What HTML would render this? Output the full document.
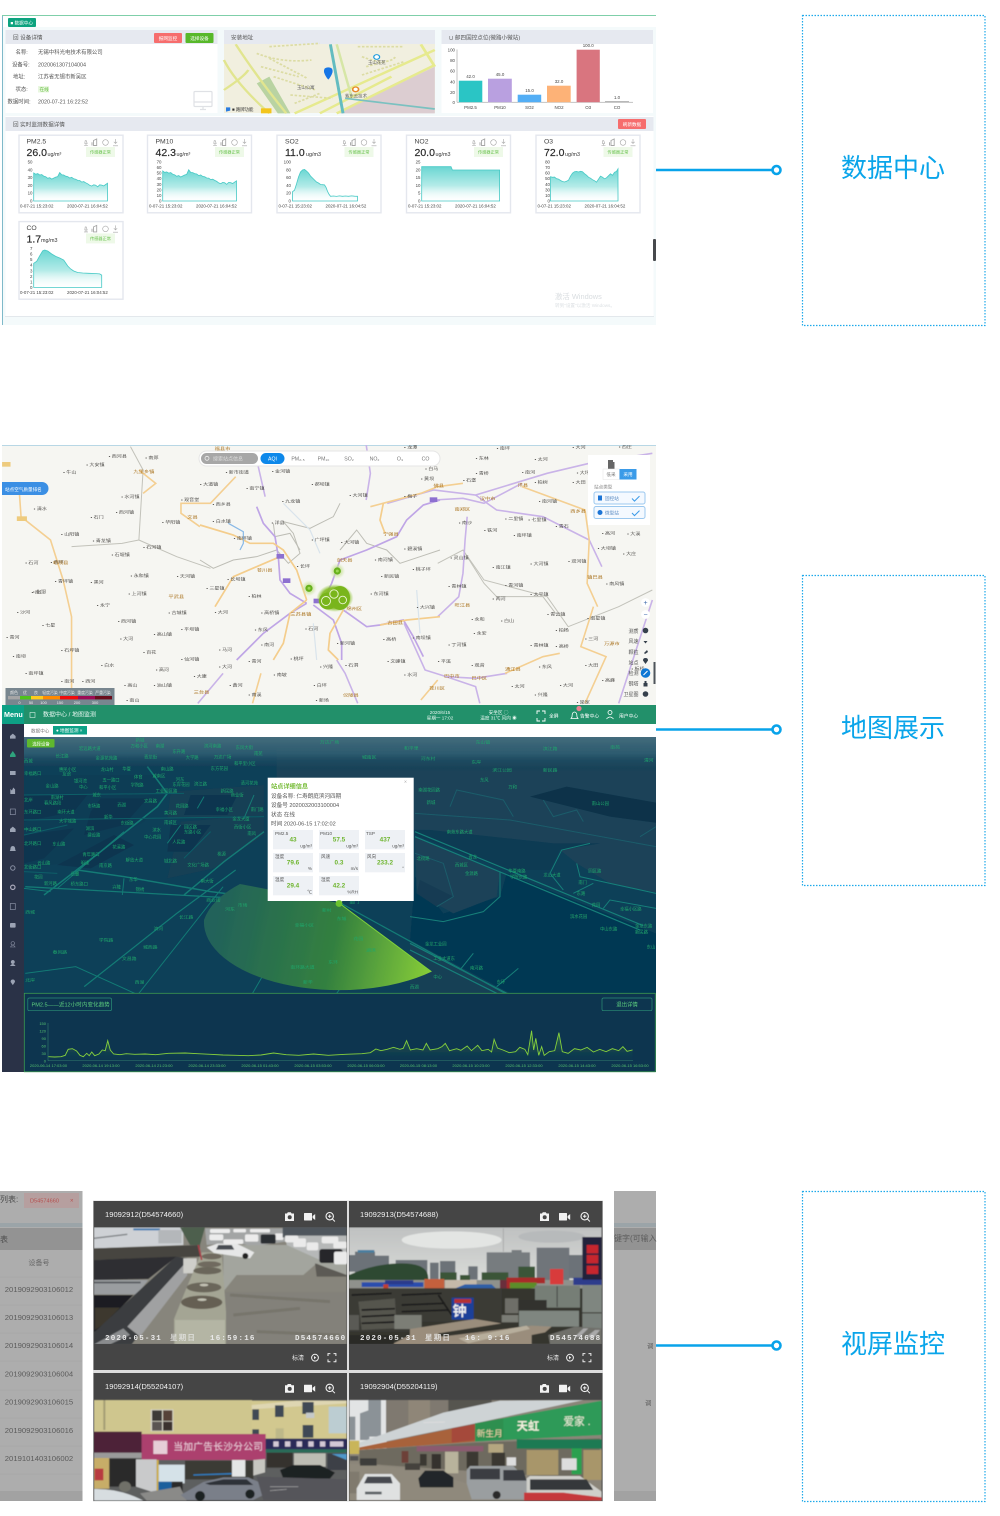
<!DOCTYPE html>
<html lang="zh-CN"><head><meta charset="utf-8"><title>数据中心</title>
<style>
html,body{margin:0;padding:0;background:#fff}
svg{display:block}
text{font-family:"Liberation Sans","Noto Sans CJK SC",sans-serif}
.lb{font-size:26px;fill:#0aa5ea;text-anchor:middle}
.ml text{font-size:12px;fill:#4f4d4a}
.mo text{font-size:12.5px;fill:#a8701a}
.dl text{font-size:11.5px;fill:#1fa86c}
.dk text{font-size:13px;fill:#1fa86c}
.c1{font-size:6.8px;fill:#444}
.c2{font-size:10.5px;fill:#2c2c2c;stroke:#2c2c2c;stroke-width:.2}
.c3{font-size:5.4px;fill:#333}
.ax{font-size:4.4px;fill:#444}
.s{font-size:5.6px;fill:#555}
.ts{font-family:"Liberation Mono","Noto Sans CJK SC",monospace;font-size:7.5px;font-weight:bold;fill:#e8e8e8;letter-spacing:1.2px}
.vt{font-size:7.6px;fill:#f0f0f0}
.rd{font-size:7.7px;fill:#5c5c5c}
.px{font-size:4.6px;fill:#555}
.pv{font-size:6.4px;font-weight:bold;fill:#6eb52f;text-anchor:middle}
.t5{font-size:5.6px;fill:#555}
.gx{font-size:4px;fill:#58c06e;text-anchor:middle}
</style></head><body>
<svg xmlns="http://www.w3.org/2000/svg" width="1000" height="1516" viewBox="0 0 1000 1516">
<defs>
<linearGradient id="t" x1="0" y1="0" x2="0" y2="1"><stop offset="0" stop-color="#6ad6d2"/><stop offset=".55" stop-color="#b4ebe8"/><stop offset="1" stop-color="#ffffff" stop-opacity=".2"/></linearGradient>
<linearGradient id="top" x1="0" y1="0" x2="0" y2="1"><stop offset="0" stop-color="#446c7c"/><stop offset=".5" stop-color="#2f5e72" stop-opacity=".85"/><stop offset="1" stop-color="#0f3d55" stop-opacity="0"/></linearGradient>
<linearGradient id="sec" gradientUnits="userSpaceOnUse" x1="215" y1="925" x2="430" y2="970"><stop offset="0" stop-color="#22625a"/><stop offset=".55" stop-color="#33803f"/><stop offset="1" stop-color="#86cc38"/></linearGradient>
<linearGradient id="gf" x1="0" y1="0" x2="0" y2="1"><stop offset="0" stop-color="#5fae3a" stop-opacity=".55"/><stop offset="1" stop-color="#0b3550" stop-opacity=".15"/></linearGradient>
<linearGradient id="sky" x1="0" y1="0" x2="0" y2="1"><stop offset="0" stop-color="#bfc1c1"/><stop offset=".45" stop-color="#d9dbd8"/><stop offset="1" stop-color="#c2c6c4"/></linearGradient>
<radialGradient id="gl"><stop offset="0" stop-color="#7cb518"/><stop offset=".75" stop-color="#82bb20" stop-opacity=".9"/><stop offset="1" stop-color="#9ccb50" stop-opacity="0"/></radialGradient>
<radialGradient id="gs"><stop offset="0" stop-color="#a5d060" stop-opacity=".8"/><stop offset=".6" stop-color="#c9e29a" stop-opacity=".6"/><stop offset="1" stop-color="#d8ebb5" stop-opacity="0"/></radialGradient>
<filter id="b3" x="-2%" y="-2%" width="104%" height="104%"><feGaussianBlur stdDeviation=".38"/></filter>
<filter id="b6" x="-2%" y="-2%" width="104%" height="104%"><feGaussianBlur stdDeviation="1.9"/></filter>
<clipPath id="cp1"><rect x="94" y="1227" width="253" height="117"/></clipPath>
<clipPath id="cp2"><rect x="349" y="1227" width="253" height="117"/></clipPath>
<clipPath id="cp3"><rect x="94" y="1399" width="253" height="102"/></clipPath>
<clipPath id="cp4"><rect x="349" y="1399" width="253" height="102"/></clipPath>
<clipPath id="cpd"><rect x="24" y="737" width="632" height="256"/></clipPath>
<clipPath id="cpm"><rect x="2" y="445" width="654" height="260"/></clipPath>
<g id="vh" fill="#f2f2f2">
<path d="M285 1213.5h2l.8-1.2h3l.8 1.2h2.4v7.5h-9z"/><circle cx="289.7" cy="1217.2" r="2" fill="#444"/>
<rect x="304" y="1213" width="8" height="7.5" rx=".6"/><path d="M312.6 1216l2.6-2v6l-2.6-2z"/>
<circle cx="329.7" cy="1216.2" r="3.7" fill="none" stroke="#f2f2f2" stroke-width="1.1"/><path d="M332.4 1219l2.5 2.5M328 1216.2h3.4M329.7 1214.5v3.4" stroke="#f2f2f2" stroke-width="1" fill="none"/>
</g>
<g id="vf" fill="none" stroke="#eee" stroke-width="1">
<circle cx="315" cy="1357.7" r="3.4"/><path d="M314 1356l2.2 1.6-2.2 1.6z" fill="#eee" stroke="none"/>
<path d="M328 1356v-2.4h2.4M333.5 1353.6h2.4v2.4M335.9 1359.4v2.4h-2.4M330.4 1361.8h-2.4v-2.4"/>
</g>
<g id="ci" fill="none" stroke="#a6a6a6" stroke-width=".6">
<path d="M84 145.5h4M86 145.5v-2M84.8 143.5h2.4l-1-3h-1z"/><path d="M93.5 145.5v-5l3.2-1.5v6.5zM92 145.5v-3.2" stroke-width=".9"/><circle cx="105.5" cy="142.5" r="2.8"/><path d="M115.5 139v4.2M113.8 141.8l1.7 1.7 1.7-1.7M113 145.8h5"/>
</g>
</defs>

<!-- ============ SECTION 1 ============ -->
<g filter="url(#b3)">
<rect x="2" y="16" width="654" height="309" fill="#f4fafb"/>
<rect x="2" y="15" width="654" height="1.3" fill="#7fcfa9"/>
<rect x="2" y="16" width="1" height="309" fill="#7fb9c9"/>
<rect x="3" y="16" width="653" height="11" fill="#fff"/>
<rect x="8" y="18" width="28" height="9" rx="1" fill="#0fa37f"/>
<text x="10.5" y="24.4" font-size="4.6" fill="#fff">■ 数据中心</text>

<rect x="5.5" y="30" width="212" height="83" fill="#fff"/><rect x="5.5" y="30" width="212" height="14" fill="#e6e9f0"/>
<rect x="224" y="30" width="211" height="83" fill="#fff"/><rect x="224" y="30" width="211" height="14" fill="#e6e9f0"/>
<rect x="441.5" y="30" width="211.5" height="83" fill="#fff"/><rect x="441.5" y="30" width="211.5" height="14" fill="#e6e9f0"/>
<text x="13" y="39.4" class="s">回 设备详情</text>
<text x="231" y="39.4" class="s">安装地址</text>
<text x="449" y="39.4" class="s">⊔ 邮四国控点位(微路小微站)</text>
<rect x="154" y="33" width="28" height="10" rx="1" fill="#f66d6d"/><text x="168" y="40" font-size="4.6" fill="#fff" text-anchor="middle">报网监控</text>
<rect x="185.5" y="33" width="28" height="10" rx="1" fill="#58b82c"/><text x="199.5" y="40" font-size="4.6" fill="#fff" text-anchor="middle">选择设备</text>

<g font-size="5.4" fill="#555">
<text x="15.5" y="54">名称:</text><text x="38" y="54">无锡中科光电技术有限公司</text>
<text x="12" y="66.3">设备号:</text><text x="38" y="66.3">2020061307104004</text>
<text x="13" y="78.6">地址:</text><text x="38" y="78.6">江苏省无锡市新吴区</text>
<text x="15.5" y="91">状态:</text><rect x="38" y="86" width="11" height="6.5" fill="#e9f7e0"/><text x="39.5" y="91" fill="#5fbd3a" font-size="4.6">在线</text>
<text x="7.5" y="103.3">数据时间:</text><text x="38" y="103.3">2020-07-21 16:22:52</text>
</g>
<g fill="none" stroke="#dfe1e5" stroke-width="1.2"><rect x="194" y="91.5" width="18" height="15" rx="1"/><path d="M194 102h18M200 109.5h6M203 106.5v3"/></g>

<!-- small map -->
<rect x="224" y="44" width="211" height="69" fill="#f1efdf"/>
<g transform="translate(0,10) scale(.42088,.33333)">
<path d="M800 310L1033 170V310z" fill="#dccdd1"/>
<path d="M610 220L660 310H690L640 200z" fill="#b9d3a2"/>
<path d="M532 150Q560 220 640 310M560 103Q610 200 680 310M532 240Q580 200 590 180" stroke="#e1e58f" stroke-width="6" fill="none"/>
<path d="M700 310L1033 120M800 310L1033 165M760 310L930 200M1000 103L1033 170" stroke="#e6ea8e" stroke-width="7" fill="none"/>
<path d="M785 103L815 310" stroke="#63bcc0" stroke-width="7" fill="none"/>
<path d="M820 265L1033 297" stroke="#7ac1c0" stroke-width="5" fill="none"/>
<path d="M800 103L835 260" stroke="#d6e6a6" stroke-width="6" fill="none"/>
<path d="M640 110l120 -10M610 130q60 30 130 20M620 170l90 30M650 200l100 40M690 255l100 10M850 110l110 0M860 140q60 30 80 0M870 170l60 -20M640 145l90 60M860 195l100 -40M700 280l60 -30" stroke="#dcdca4" stroke-width="5" stroke-dasharray="6 4" fill="none"/>
<path d="M780 172q-12 0-10 15q3 12 10 22q7-10 10-22q2-15-10-15z" fill="#1676e6"/>
<circle cx="895" cy="141" r="7" fill="#fff" stroke="#1d9bdc" stroke-width="3"/>
<circle cx="845" cy="238" r="7" fill="#fff" stroke="#e88a2a" stroke-width="4"/>
<rect x="620" y="295" width="25" height="15" fill="#f3c51f"/>
<path d="M537 292h10v10l-10 3z" fill="#2a7ce0"/>
</g>
<g font-size="4.4" fill="#666">
<text x="297" y="89" >玉山公寓</text><text x="368" y="64">玉山花苑</text><text x="345" y="97.5">紫东云技术</text><text x="232" y="111" fill="#333">■ 路牌功能</text>
</g>

<!-- bar chart -->
<path d="M457 49.5v52.7h176" stroke="#888" stroke-width=".5" fill="none"/>
<rect x="458.8" y="80.7" width="23.5" height="21.5" fill="#2cc5c5"/>
<rect x="488" y="78.7" width="23.8" height="23.5" fill="#b9a0e0"/>
<rect x="517.7" y="94.7" width="23.5" height="7.5" fill="#52aef5"/>
<rect x="547" y="85.7" width="23.7" height="16.5" fill="#fdb277"/>
<rect x="576.6" y="49.7" width="23.2" height="52.5" fill="#d9747f"/>
<rect x="605" y="101.3" width="24" height="1" fill="#999"/>
<g class="ax" text-anchor="end"><text x="455" y="51.5">100</text><text x="455" y="62">80</text><text x="455" y="72.5">60</text><text x="455" y="83.3">40</text><text x="455" y="93.8">20</text><text x="455" y="104">0</text></g>
<g class="ax" text-anchor="middle"><text x="470.5" y="78">42.0</text><text x="500" y="76">45.0</text><text x="529.5" y="92">15.0</text><text x="559" y="83">32.0</text><text x="588.2" y="47">100.0</text><text x="617" y="99">1.0</text>
<text x="470.5" y="109">PM2.5</text><text x="500" y="109">PM10</text><text x="529.5" y="109">SO2</text><text x="559" y="109">NO2</text><text x="588.2" y="109">O3</text><text x="617" y="109">CO</text></g>

<!-- section 2 -->
<rect x="5.5" y="116" width="648" height="200" fill="#fff"/>
<rect x="5.5" y="117" width="648" height="14" fill="#e6e9f0"/>
<text x="13" y="126.4" class="s">回 实时监测数据详情</text>
<rect x="618" y="119" width="28" height="10" rx="1" fill="#f66d6d"/><text x="632" y="126" font-size="4.6" fill="#fff" text-anchor="middle">刷新数据</text>

<!-- card 1 -->
<g>
<rect x="19" y="135.2" width="104" height="77.6" fill="#fff" stroke="#e4e7ee" stroke-width="1.4"/>
<text x="26.5" y="143.5" class="c1">PM2.5</text>
<text x="26.5" y="156" class="c2">26.0</text><text x="47.5" y="155.8" class="c3">ug/m³</text>
<rect x="86" y="147" width="29" height="10" fill="#eef9e8"/><text x="100.5" y="153.6" font-size="4.2" fill="#66c14a" text-anchor="middle">传感器正常</text>
<use href="#ci"/>
<g class="ax" text-anchor="end"><text x="32.5" y="163.6">50</text><text x="32.5" y="171.4">40</text><text x="32.5" y="179">30</text><text x="32.5" y="186.8">20</text><text x="32.5" y="194.6">10</text><text x="32.5" y="202.4">0</text></g>
<text x="20" y="207.5" class="ax">0-07-21 15:23:02</text><text x="67" y="207.5" class="ax">2020-07-21 16:04:52</text>
<path d="M33.7 173l2 1.2 2-.6 2 1.4 2-.5 2 1.6 2 .6 2 1.6 2-.6 2 1.4 2-1 2-1 2-.5 2-4 2 2.2 2 .2 2 1.2 2 .4 2 1.4 2-.7 2 1.5 2 .4 2 1.2 2 .1 2 1.6 2-.5 2 1.2 2 1 2 1.5 2 .8 2-1.3 2 .4 2 1.6 2-2 2 .3 2 .8 2-1.4 1.8-1.2V201H33.7z" fill="url(#t)" stroke="#46c9c5" stroke-width=".8"/>
</g>
<!-- card 2 -->
<g transform="translate(129,0)">
<rect x="18.5" y="135.2" width="104" height="77.6" fill="#fff" stroke="#e4e7ee" stroke-width="1.4"/>
<text x="26.5" y="143.5" class="c1">PM10</text>
<text x="26.5" y="156" class="c2">42.3</text><text x="47.5" y="155.8" class="c3">ug/m³</text>
<rect x="86" y="147" width="29" height="10" fill="#eef9e8"/><text x="100.5" y="153.6" font-size="4.2" fill="#66c14a" text-anchor="middle">传感器正常</text>
<use href="#ci"/>
<g class="ax" text-anchor="end"><text x="32.5" y="163.6">70</text><text x="32.5" y="169">60</text><text x="32.5" y="174.5">50</text><text x="32.5" y="180">40</text><text x="32.5" y="186">30</text><text x="32.5" y="191.5">20</text><text x="32.5" y="197">10</text><text x="32.5" y="202.4">0</text></g>
<text x="20" y="207.5" class="ax">0-07-21 15:23:02</text><text x="67" y="207.5" class="ax">2020-07-21 16:04:52</text>
<path d="M33.7 171l2 1.4 2-.5 2 1.2 2-.5 2 1.6 2 .7 2 1.4 2-.7 2 1.4 2-1 2-1 2-.6 2-4.6 2 2.6 2 .2 2 1 2 .4 2 1.6 2-.7 2 1.5 2 .4 2 1.2 2 .1 2 1.6 2-.5 2 1.2 2 1 2 1.5 2 .8 2-1.3 2 .4 2 1.6 2-2 2 .3 2 .8 2-1.4 1.8-1.2V201H33.7z" fill="url(#t)" stroke="#46c9c5" stroke-width=".8"/>
</g>
<!-- card 3 -->
<g transform="translate(258.5,0)">
<rect x="18.5" y="135.2" width="104" height="77.6" fill="#fff" stroke="#e4e7ee" stroke-width="1.4"/>
<text x="26.5" y="143.5" class="c1">SO2</text>
<text x="26.5" y="156" class="c2">11.0</text><text x="47.5" y="155.8" class="c3">ug/m3</text>
<rect x="86" y="147" width="29" height="10" fill="#eef9e8"/><text x="100.5" y="153.6" font-size="4.2" fill="#66c14a" text-anchor="middle">传感器正常</text>
<use href="#ci"/>
<g class="ax" text-anchor="end"><text x="32.5" y="163.6">100</text><text x="32.5" y="171.4">80</text><text x="32.5" y="179">60</text><text x="32.5" y="186.8">40</text><text x="32.5" y="194.6">20</text><text x="32.5" y="202.4">0</text></g>
<text x="20" y="207.5" class="ax">0-07-21 15:23:02</text><text x="67" y="207.5" class="ax">2020-07-21 16:04:52</text>
<path d="M34 191.7l2-1.5 2-6.2 2-7 2-5 2-2 2-.6 2 1.6 2 2 2 3 2 2 2 2 2 2 2 1 2 1.5 2 .2 2 .2 1.5 2.4 1.5 4 1.5 3 1.5 2 3-.3 3 .4 3-.5 3 .4 3-.3 3 .3 3-.4 3 .3 3 .1V201H34z" fill="url(#t)" stroke="#46c9c5" stroke-width=".8"/>
</g>
<!-- card 4 -->
<g transform="translate(388,0)">
<rect x="18.5" y="135.2" width="104" height="77.6" fill="#fff" stroke="#e4e7ee" stroke-width="1.4"/>
<text x="26.5" y="143.5" class="c1">NO2</text>
<text x="26.5" y="156" class="c2">20.0</text><text x="47.5" y="155.8" class="c3">ug/m3</text>
<rect x="86" y="147" width="29" height="10" fill="#eef9e8"/><text x="100.5" y="153.6" font-size="4.2" fill="#66c14a" text-anchor="middle">传感器正常</text>
<use href="#ci"/>
<g class="ax" text-anchor="end"><text x="32.5" y="163.6">25</text><text x="32.5" y="171.4">20</text><text x="32.5" y="179">15</text><text x="32.5" y="186.8">10</text><text x="32.5" y="194.6">5</text><text x="32.5" y="202.4">0</text></g>
<text x="20" y="207.5" class="ax">0-07-21 15:23:02</text><text x="67" y="207.5" class="ax">2020-07-21 16:04:52</text>
<path d="M33.7 166.7H63l1.4 3.3H111.6V201H33.7z" fill="url(#t)" stroke="#46c9c5" stroke-width=".8"/>
</g>
<!-- card 5 -->
<g transform="translate(517.5,0)">
<rect x="18.5" y="135.2" width="104" height="77.6" fill="#fff" stroke="#e4e7ee" stroke-width="1.4"/>
<text x="26.5" y="143.5" class="c1">O3</text>
<text x="26.5" y="156" class="c2">72.0</text><text x="47.5" y="155.8" class="c3">ug/m3</text>
<rect x="86" y="147" width="29" height="10" fill="#eef9e8"/><text x="100.5" y="153.6" font-size="4.2" fill="#66c14a" text-anchor="middle">传感器正常</text>
<use href="#ci"/>
<g class="ax" text-anchor="end"><text x="32.5" y="163.6">80</text><text x="32.5" y="169">70</text><text x="32.5" y="174.5">60</text><text x="32.5" y="180">50</text><text x="32.5" y="186">40</text><text x="32.5" y="191.5">30</text><text x="32.5" y="197">10</text><text x="32.5" y="202.4">0</text></g>
<text x="20" y="207.5" class="ax">0-07-21 15:23:02</text><text x="67" y="207.5" class="ax">2020-07-21 16:04:52</text>
<path d="M33 176.7l2 .6 2-.2 2 1.6 2 .4 2 1.4 2 1 2 .5 2-.8 2-1 2-4 2-3 2-1.5 2-.3 2 .6 2-.7 2 .4 2 2 2 1.5 2 2 2 1 2 1.5 2 1 2 1.5 2-3 2-3 2 1 2 1.6 2-1 2-2 2-2 2 1.5 2-3 2-1 1.5-2.5V201H33z" fill="url(#t)" stroke="#46c9c5" stroke-width=".8"/>
</g>
<!-- card 6 -->
<g transform="translate(0,86.4)">
<rect x="19" y="135.2" width="104" height="77.6" fill="#fff" stroke="#e4e7ee" stroke-width="1.4"/>
<text x="26.5" y="143.5" class="c1">CO</text>
<text x="26.5" y="156" class="c2">1.7</text><text x="41" y="155.8" class="c3">mg/m3</text>
<rect x="86" y="147" width="29" height="10" fill="#eef9e8"/><text x="100.5" y="153.6" font-size="4.2" fill="#66c14a" text-anchor="middle">传感器正常</text>
<use href="#ci"/>
<g class="ax" text-anchor="end"><text x="32.5" y="163.6">7</text><text x="32.5" y="169">6</text><text x="32.5" y="174.5">5</text><text x="32.5" y="180">4</text><text x="32.5" y="186">3</text><text x="32.5" y="191.5">2</text><text x="32.5" y="197">1</text><text x="32.5" y="202.4">0</text></g>
<text x="20" y="207.5" class="ax">0-07-21 15:23:02</text><text x="67" y="207.5" class="ax">2020-07-21 16:04:52</text>
<path d="M33.7 176.9l3-2 3-5.5 3-5 2-.8 3 1 4 3 4 2.4 4 1.6 4 2 2 3 2 3 3 3 3 2 4 1.5 5 .5 6 .3 6 .2 5 .4 2 1.2V201H33.7z" fill="url(#t)" stroke="#46c9c5" stroke-width=".8"/>
</g>
<text x="555" y="299" font-size="7.4" fill="#d9dde0">激活 Windows</text>
<text x="555" y="307" font-size="4.6" fill="#dde1e4">转到"设置"以激活 Windows。</text>
<rect x="5" y="316" width="649" height="1" fill="#e3e8ec"/>
<rect x="653" y="239" width="3" height="22" rx="1" fill="#46494d"/>
</g>

<!-- ============ SECTION 2: MAP ============ -->
<g clip-path="url(#cpm)">
<g filter="url(#b3)">
<rect x="2" y="445" width="654" height="260" fill="#f6f6f2"/>
<rect x="2" y="445" width="654" height=".8" fill="#a9cfe2"/>
<g transform="translate(0,440) scale(.42088,.33333)" fill="none">
<g stroke="#c2c2ba" stroke-width="1">
<polyline vector-effect="non-scaling-stroke" points="310,20 340,90 330,300 420,350 500,385"/>
<polyline vector-effect="non-scaling-stroke" points="1040,370 1100,330 1150,420 1300,470 1350,560 1470,500 1550,450"/>
<polyline vector-effect="non-scaling-stroke" points="1100,330 1150,430 1180,470 1290,470 1320,520"/>
<polyline vector-effect="non-scaling-stroke" points="170,320 290,310 330,300"/>
</g>
<g stroke="#c9b3e8" stroke-width="1.6">
<polyline vector-effect="non-scaling-stroke" points="610,60 630,170"/>
<polyline vector-effect="non-scaling-stroke" points="870,14 880,100 870,180"/>
<polyline vector-effect="non-scaling-stroke" points="470,790 530,700"/>
<polyline vector-effect="non-scaling-stroke" points="920,190 1030,150 1130,165 1300,100 1400,70 1550,40"/>
<polyline vector-effect="non-scaling-stroke" points="1030,180 1100,175 1150,190 1240,130"/>
<polyline vector-effect="non-scaling-stroke" points="1110,230 1105,300 1100,400 1090,470 1040,530"/>
<polyline vector-effect="non-scaling-stroke" points="960,550 1010,690 1060,710 1130,740 1140,790"/>
<polyline vector-effect="non-scaling-stroke" points="1060,710 1130,715 1205,700"/>
<polyline vector-effect="non-scaling-stroke" points="800,660 820,700 850,790"/>
<polyline vector-effect="non-scaling-stroke" points="1470,790 1550,480"/>
<polyline vector-effect="non-scaling-stroke" points="1130,165 1180,210 1290,230 1400,300 1430,380"/>
</g>
<g stroke="#f4cf92" stroke-width="1.6">
<polyline vector-effect="non-scaling-stroke" points="45,140 50,230 120,300 150,420 170,530 170,790"/>
<polyline vector-effect="non-scaling-stroke" points="330,90 370,130 340,160"/>
<polyline vector-effect="non-scaling-stroke" points="560,110 500,190 430,190 430,220 475,260"/>
<polyline vector-effect="non-scaling-stroke" points="620,700 600,790"/>
<polyline vector-effect="non-scaling-stroke" points="880,200 1000,160 1040,140 1100,130"/>
<polyline vector-effect="non-scaling-stroke" points="1410,500 1380,620 1440,650 1390,790"/>
<polyline vector-effect="non-scaling-stroke" points="1200,700 1290,650 1330,640"/>
<polyline vector-effect="non-scaling-stroke" points="1240,140 1390,210 1400,300 1395,430 1420,500"/>
<polyline vector-effect="non-scaling-stroke" points="1000,780 1040,720"/>
</g>
</g>
<!-- centre roads traced at 3x -->
<g transform="translate(200,500) scale(.33333)" fill="none">
<g stroke="#bdbdb5" stroke-width="1">
<polyline vector-effect="non-scaling-stroke" points="0,180 40,205 100,180 170,170 230,150 265,190 300,160 280,100 250,65 330,85 400,50 420,10"/>
<polyline vector-effect="non-scaling-stroke" points="220,70 225,110 270,100 300,150"/>
<polyline vector-effect="non-scaling-stroke" points="420,150 470,90 500,130 560,150 600,190 660,170 720,150"/>
</g>
<g stroke="#bfa5e6" stroke-width="1.7">
<polyline vector-effect="non-scaling-stroke" points="170,20 190,70 225,110 235,170 240,240 270,280 320,310"/>
<polyline vector-effect="non-scaling-stroke" points="720,0 670,15 620,60 590,110 500,150 420,180 395,250 380,280"/>
<polyline vector-effect="non-scaling-stroke" points="110,480 190,400 270,340 320,310"/>
<polyline vector-effect="non-scaling-stroke" points="340,315 400,360 425,430 425,480"/>
<polyline vector-effect="non-scaling-stroke" points="430,330 500,380 540,375 610,360 640,410 670,470"/>
</g>
<g stroke="#f4cd8c" stroke-width="1.7">
<polyline vector-effect="non-scaling-stroke" points="0,75 100,105 150,130 220,130 250,150 290,210 310,270 320,300"/>
<polyline vector-effect="non-scaling-stroke" points="45,320 100,230 240,170"/>
<polyline vector-effect="non-scaling-stroke" points="320,300 270,340 250,430 220,480"/>
<polyline vector-effect="non-scaling-stroke" points="430,330 390,400 385,450 415,480"/>
<polyline vector-effect="non-scaling-stroke" points="540,375 620,360 720,350"/>
<polyline vector-effect="non-scaling-stroke" points="550,10 540,60 555,100"/>
</g>
<polyline vector-effect="non-scaling-stroke" stroke="#88b8e6" stroke-width="1.2" points="85,70 130,95 130,130 120,150"/>
<polyline vector-effect="non-scaling-stroke" stroke="#d9e4ec" stroke-width="1.2" points="250,10 330,90 360,160"/>
<polyline vector-effect="non-scaling-stroke" stroke="#d9e4ec" stroke-width="1.2" points="340,370 350,480"/>
<polyline vector-effect="non-scaling-stroke" stroke="#d9e4ec" stroke-width="1.2" points="650,270 660,400"/>
</g>
<g transform="translate(0,440) scale(.42088,.33333)">
<g fill="#8d6fd0"><rect x="657" y="342" width="18" height="14"/><rect x="672" y="415" width="18" height="14"/><rect x="745" y="476" width="18" height="14"/><rect x="1021" y="172" width="18" height="14"/></g>
<g fill="#eecb7e"><rect x="5" y="66" width="20" height="14"/><rect x="40" y="229" width="24" height="14"/></g>
<g class="ml">
<text x="258" y="52">• 西河县</text><text x="345" y="57">• 南郑</text><text x="205" y="78">• 大安镇</text><text x="536" y="100">• 新市街道</text><text x="646" y="97">• 金河镇</text><text x="475" y="137">• 大道镇</text><text x="585" y="148">• 南宁镇</text><text x="740" y="137">• 郝坝镇</text><text x="830" y="170">• 大河镇</text><text x="288" y="174">• 水河镇</text><text x="430" y="183">• 观音堂</text><text x="670" y="187">• 九龙镇</text><text x="275" y="220">• 西河镇</text><text x="505" y="197">• 西乡县</text><text x="385" y="250">• 华阳镇</text><text x="505" y="247">• 白水镇</text><text x="645" y="252">• 洋县</text><text x="145" y="286">• 山阳镇</text><text x="220" y="306">• 青龙镇</text><text x="555" y="298">• 南坪镇</text><text x="340" y="325">• 石河镇</text><text x="740" y="303">• 广坪镇</text><text x="810" y="311">• 大河镇</text><text x="960" y="330">• 碧溪镇</text><text x="1070" y="357">• 灵山镇</text><text x="1170" y="385">• 南江镇</text><text x="1260" y="375">• 大河镇</text><text x="1350" y="368">• 双河镇</text><text x="1420" y="328">• 大坝镇</text><text x="265" y="348">• 石堰镇</text><text x="120" y="370">• 西坪</text><text x="60" y="372">• 石河</text><text x="890" y="363">• 南河镇</text><text x="980" y="391">• 桃子坪</text><text x="705" y="383">• 长坪</text><text x="310" y="411">• 永和镇</text><text x="420" y="412">• 天河镇</text><text x="490" y="449">• 三星镇</text><text x="130" y="427">• 青坪镇</text><text x="540" y="421">• 长坝镇</text><text x="78" y="459">• 化河</text><text x="305" y="465">• 上河镇</text><text x="590" y="472">• 柏林</text><text x="880" y="465">• 东河镇</text><text x="905" y="412">• 新民镇</text><text x="1065" y="443">• 青林镇</text><text x="1200" y="440">• 青河镇</text><text x="1260" y="466">• 太平镇</text><text x="1440" y="435">• 南风镇</text><text x="1300" y="526">• 青云镇</text><text x="510" y="520">• 大河</text><text x="400" y="522">• 古城镇</text><text x="620" y="522">• 高桥镇</text><text x="1120" y="541">• 永和</text><text x="1190" y="546">• 白山</text><text x="990" y="506">• 大兴镇</text><text x="280" y="547">• 西河镇</text><text x="430" y="572">• 平坝镇</text><text x="605" y="573">• 东风</text><text x="725" y="570">• 石河</text><text x="285" y="600">• 大河</text><text x="365" y="587">• 高山镇</text><text x="15" y="596">• 青河</text><text x="910" y="601">• 高桥</text><text x="980" y="597">• 南坝镇</text><text x="1125" y="583">• 永安</text><text x="1260" y="620">• 青林镇</text><text x="1320" y="575">• 柏杨</text><text x="1395" y="538">• 南星镇</text><text x="145" y="634">• 石坪镇</text><text x="520" y="633">• 马河</text><text x="620" y="618">• 南河</text><text x="800" y="613">• 新河镇</text><text x="1065" y="618">• 丁河镇</text><text x="1320" y="622">• 高桥</text><text x="30" y="652">• 南坝</text><text x="430" y="662">• 仙河镇</text><text x="590" y="668">• 青河</text><text x="690" y="660">• 桃坪</text><text x="920" y="667">• 文峰镇</text><text x="1040" y="668">• 平溪</text><text x="760" y="684">• 兴隆</text><text x="820" y="680">• 石洞</text><text x="60" y="703">• 南坪镇</text><text x="370" y="693">• 高河</text><text x="520" y="684">• 大河</text><text x="650" y="708">• 南坡</text><text x="960" y="708">• 水河</text><text x="1280" y="684">• 东风</text><text x="1390" y="680">• 大田</text><text x="145" y="727">• 南河</text><text x="195" y="727">• 西河</text><text x="460" y="713">• 大康</text><text x="295" y="739">• 高山</text><text x="365" y="740">• 油山镇</text><text x="545" y="740">• 黄河</text><text x="745" y="740">• 白坪</text><text x="1215" y="742">• 太河</text><text x="1330" y="740">• 大河</text><text x="590" y="768">• 南溪</text><text x="750" y="784">• 新场</text><text x="1270" y="768">• 兴隆</text><text x="300" y="784">• 南山</text><text x="1370" y="790">• 梁家</text><text x="1360" y="26">• 大河</text><text x="1470" y="24">• 西庄</text><text x="1180" y="28">• 南坪</text><text x="1270" y="62">• 太河</text><text x="1130" y="103">• 青桥</text><text x="1240" y="100">• 南河</text><text x="1370" y="102">• 大坪</text><text x="1470" y="100">• 新河</text><text x="1270" y="130">• 柏树</text><text x="1360" y="130">• 大田</text><text x="1490" y="130">• 太平</text><text x="1150" y="275">• 铁河</text><text x="1220" y="290">• 南坪镇</text><text x="1320" y="262">• 青石</text><text x="1200" y="240">• 二里镇</text><text x="1255" y="243">• 七里镇</text><text x="1430" y="283">• 高河</text><text x="1490" y="285">• 大溪</text><text x="1280" y="188">• 南河镇</text><text x="1390" y="600">• 三河</text><text x="1090" y="252">• 南沙</text><text x="960" y="172">• 梅子</text><text x="1000" y="120">• 黄坝</text><text x="1100" y="125">• 石堡</text><text x="1130" y="58">• 东林</text><text x="960" y="25">• 龙潭</text><text x="1010" y="90">• 白马</text><text x="40" y="520">• 沙河</text><text x="100" y="560">• 七星</text><text x="215" y="430">• 黑河</text><text x="230" y="500">• 永宁</text><text x="340" y="640">• 百花</text><text x="240" y="680">• 白水</text><text x="100" y="770">• 马家</text><text x="1500" y="690">• 板桥</text><text x="1430" y="725">• 高峰</text><text x="1170" y="480">• 两河</text><text x="1120" y="680">• 观音</text><text x="1480" y="345">• 大庄</text><text x="150" y="100">• 牛山</text><text x="80" y="210">• 清水</text><text x="215" y="235">• 石门</text><text x="75" y="460">• 南口</text>
</g>
<g class="mo">
<text x="317" y="99">九里乡镇</text><text x="125" y="372">毛项县</text><text x="400" y="474">平武县</text><text x="610" y="395">苍川县</text><text x="823" y="510">绵州区</text><text x="690" y="526">三苏县镇</text><text x="920" y="552">古田县</text><text x="1080" y="500">旺江县</text><text x="1030" y="141">佛县</text><text x="1080" y="211">南郑区</text><text x="1355" y="218">西乡县</text><text x="1230" y="140">洋县</text><text x="910" y="287">宁强县</text><text x="800" y="365">剑天县</text><text x="1200" y="692">通江县</text><text x="1020" y="748">苍川区</text><text x="1120" y="718">巴中区</text><text x="1395" y="416">镇巴县</text><text x="1435" y="615">万源市</text><text x="815" y="770">仪陇县</text><text x="460" y="760">三台县</text><text x="445" y="236">文县</text><text x="510" y="30" fill="#555">福县市</text><text x="1140" y="180" fill="#555">汉中市</text><text x="1055" y="712" fill="#555">巴中市</text>
</g>
</g>
<!-- clusters -->
<circle cx="337.3" cy="571" r="8" fill="url(#gs)"/><circle cx="337.3" cy="571" r="3.6" fill="#66b11b"/><circle cx="337.3" cy="571" r="1.5" fill="#9cd654"/>
<circle cx="309" cy="588.3" r="8" fill="url(#gs)"/><circle cx="309" cy="588.3" r="3.6" fill="#66b11b"/><circle cx="309" cy="588.3" r="1.5" fill="#9cd654"/>
<ellipse cx="335" cy="598" rx="18.5" ry="14" fill="url(#gl)"/><ellipse cx="340" cy="598" rx="10" ry="12" fill="#79b51a"/><ellipse cx="328" cy="601" rx="9" ry="8.5" fill="#79b51a"/>
<g fill="none" stroke="#eef7d8" stroke-width=".9"><circle cx="334" cy="594" r="4.2"/><circle cx="326" cy="601" r="4.5"/><circle cx="342.7" cy="600" r="3.8"/></g>

<!-- search bar -->
<rect x="199" y="451" width="241" height="15" rx="7.5" fill="#fff" stroke="#e5e5e5"/>
<rect x="201" y="453" width="57" height="11" rx="5.5" fill="#a7a7a7"/>
<circle cx="207" cy="458.3" r="2" fill="none" stroke="#eee" stroke-width=".8"/><text x="213" y="460.5" font-size="5" fill="#ddd">搜索站点信息</text>
<rect x="260.5" y="453" width="24" height="11" rx="5.5" fill="#0d88ea"/><text x="272.5" y="460.6" font-size="5.2" fill="#fff" text-anchor="middle">AQI</text>
<g font-size="5.2" fill="#777" text-anchor="middle"><text x="298" y="460.6">PM₂.₅</text><text x="323.5" y="460.6">PM₁₀</text><text x="349" y="460.6">SO₂</text><text x="374.5" y="460.6">NO₂</text><text x="400" y="460.6">O₃</text><text x="425.5" y="460.6">CO</text></g>
<!-- right panel -->
<rect x="588" y="455" width="62" height="70" fill="#fff"/>
<path d="M608 460h5v9.5h-5zM613 462h1.5v7.5H613z" fill="#666"/>
<rect x="603" y="469" width="16.5" height="10.5" fill="#fff" stroke="#e5e5e5" stroke-width=".5"/><text x="611" y="476.2" font-size="4.6" fill="#777" text-anchor="middle">低采</text>
<rect x="619.5" y="469" width="17" height="10.5" fill="#3b9be8"/><text x="628" y="476.2" font-size="4.6" fill="#fff" text-anchor="middle">采用</text>
<text x="594" y="488.5" font-size="4.6" fill="#888">站点类型</text>
<rect x="594" y="492" width="51" height="12" rx="2" fill="#f4f9ff" stroke="#9bc8ef"/><rect x="598" y="495.5" width="4" height="5" fill="#1c74d6"/><text x="605" y="500.2" font-size="4.6" fill="#5a8bc2">固控站</text><path d="M632 498.5l2.5 2.6 5-5" fill="none" stroke="#3b9be8"/>
<rect x="594" y="506.5" width="51" height="12" rx="2" fill="#f4f9ff" stroke="#9bc8ef"/><circle cx="600" cy="512.5" r="2.5" fill="#1c74d6"/><text x="605" y="514.7" font-size="4.6" fill="#5a8bc2">微型站</text><path d="M632 513l2.5 2.6 5-5" fill="none" stroke="#3b9be8"/>
<!-- left pill -->
<path d="M2 482h40a6.5 6.5 0 0 1 0 13H2z" fill="#3a8fe4"/><text x="5" y="491" font-size="4.6" fill="#fff">站点空气质量排名</text>
<!-- right tools -->
<circle cx="645.5" cy="602.5" r="4.4" fill="#fff"/><text x="645.5" y="605" font-size="7" fill="#3766a8" text-anchor="middle">+</text>
<circle cx="645.5" cy="614.5" r="4.4" fill="#fff"/><text x="645.5" y="617" font-size="7" fill="#3766a8" text-anchor="middle">−</text>
<g font-size="5" fill="#555" text-anchor="middle"><text x="633.5" y="633">测质</text><text x="633.5" y="643">风速</text><text x="633.5" y="654">颗粒</text><text x="633.5" y="664.5">站点</text><text x="633.5" y="675">检测</text><text x="633.5" y="685.5">钢塔</text><text x="631" y="696">卫星图</text></g>
<g fill="#34404c"><circle cx="645.5" cy="630.5" r="2.8"/><path d="M643.5 641h4l-2 2.5zM644 653l3-3 1 2-3 2zM645.5 658q-2.6 0-2.5 2.5l2.5 3.5 2.5-3.5q.1-2.5-2.5-2.5zM643.5 683h4v3.5h-4zM644.5 681h2v2h-2z"/><circle cx="645.5" cy="694" r="2.8"/></g>
<circle cx="645.5" cy="673" r="4.8" fill="#1077d4"/><path d="M643.5 675l4-4" stroke="#fff"/>
<rect x="653.5" y="662" width="2" height="22" fill="#4f555c"/>
<!-- legend -->
<rect x="5.5" y="688" width="109" height="17" fill="#78868f"/>
<g font-size="3.9" fill="#e6e6e6" text-anchor="middle"><text x="14" y="694">颜色</text><text x="25" y="694">优</text><text x="36" y="694">良</text><text x="50" y="694">轻度污染</text><text x="67" y="694">中度污染</text><text x="85" y="694">重度污染</text><text x="103" y="694">严重污染</text></g>
<rect x="8" y="696" width="12" height="3.4" fill="#a5a5a5"/><rect x="20" y="696" width="11" height="3.4" fill="#4fc21c"/><rect x="31" y="696" width="12" height="3.4" fill="#ffca1f"/><rect x="43" y="696" width="17" height="3.4" fill="#ff8a00"/><rect x="60" y="696" width="18" height="3.4" fill="#ef0b0b"/><rect x="78" y="696" width="17" height="3.4" fill="#9c0e54"/><rect x="95" y="696" width="17" height="3.4" fill="#6b0a1a"/>
<g font-size="3.9" fill="#eee" text-anchor="middle"><text x="19.5" y="704">0</text><text x="31" y="704">50</text><text x="43.5" y="704">100</text><text x="60" y="704">150</text><text x="77" y="704">200</text><text x="95" y="704">300</text></g>
</g>
</g>

<!-- ============ SECTION 2b: DARK MAP ============ -->
<g filter="url(#b3)">
<rect x="2" y="705" width="654" height="19.5" fill="#20906a"/>
<rect x="2" y="705" width="22" height="19.5" fill="#0fa085"/>
<text x="4" y="716.8" font-size="7.2" font-weight="bold" fill="#fff">Menu</text>
<rect x="30" y="712.5" width="5" height="5" fill="none" stroke="#d8f0e4" stroke-width=".6"/>
<text x="43" y="716.5" font-size="6" fill="#e9f7f1">数据中心 / 地图监测</text>
<g font-size="4.6" fill="#e9f7f1" text-anchor="middle"><text x="440" y="714">2020/6/15</text><text x="440" y="719.5">星期一 17:02</text><text x="498.5" y="714">安坐区 ◯</text><text x="498.5" y="719.5">温度 31℃ 风向 ◉</text></g>
<path d="M537 714v-3h3M542 711h3v3M545 718v3h-3M540 721h-3v-3" stroke="#fff" fill="none" stroke-width=".9"/><text x="549" y="717.6" font-size="4.8" fill="#fff">全屏</text>
<path d="M572 717q0-5 2.5-5t2.5 5l1 1.5h-7z" fill="none" stroke="#fff" stroke-width=".8"/><circle cx="579" cy="708.5" r="2.6" fill="#e98090"/><text x="580" y="717.6" font-size="4.8" fill="#fff">告警中心</text>
<circle cx="610" cy="712.5" r="2" fill="none" stroke="#fff" stroke-width=".8"/><path d="M606.5 719q3.5-4 7 0" fill="none" stroke="#fff" stroke-width=".8"/><text x="619" y="717.6" font-size="4.8" fill="#fff">用户中心</text>

<rect x="2" y="724" width="22" height="348" fill="#2a3046"/>
<rect x="24" y="724" width="632" height="13" fill="#fff"/>
<text x="31" y="732.6" font-size="4.6" fill="#777">数据中心</text>
<rect x="53" y="726" width="34" height="8.5" fill="#11a287"/><text x="56" y="732.2" font-size="4.6" fill="#fff">● 地图监测 ×</text>
<g fill="#9ba3b4">
<path d="M10 736l2.8-2.4 2.8 2.4v2.6h-5.6z"/><path d="M10 755l2.8-4 2.8 4v2h-5.6z" fill="#2fa37d"/><rect x="10" y="771" width="5.6" height="4"/><path d="M10.3 794v-5l1.6 1.5 1.4-3 1.8 2v4.5z"/><rect x="10.3" y="809" width="5" height="5.6" fill="none" stroke="#8890a3" stroke-width=".7"/><path d="M10 829l2.8-2.4 2.8 2.4v3h-5.6z"/><path d="M12.8 846q-2.4 0-2.4 3.4l-.6 1.6h6l-.6-1.6q0-3.4-2.4-3.4z"/><circle cx="12.8" cy="868" r="2.2" fill="none" stroke="#8890a3"/><circle cx="12.8" cy="887.3" r="2.2" fill="none" stroke="#aab" stroke-width="1.2"/><rect x="10.3" y="903.5" width="5" height="6" fill="none" stroke="#8890a3" stroke-width=".7"/><rect x="10" y="923" width="5.6" height="4.6" rx=".8"/><path d="M10.5 947q2.3-3.6 4.6 0zM12.8 941.5a1.8 1.8 0 1 0 .01 0z" fill="none" stroke="#8890a3" stroke-width=".6"/><path d="M10 966q2.8-4 5.6 0zM12.8 960a2 2 0 1 0 .01 0z"/><path d="M12.8 979.5q-2.2 0-2.2 2.4l2.2 3.2 2.2-3.2q0-2.4-2.2-2.4z"/>
</g>

<!-- dark map -->
<g clip-path="url(#cpd)">
<rect x="24" y="737" width="632" height="256" fill="#0f3f58"/>
<!-- left zone blocks -->
<g transform="translate(24,735) scale(.33333)">
<path d="M0 120H400L430 175 360 260 150 380 0 400z" fill="#0d3d55"/>
<path d="M0 180H190L150 230 0 260zM230 190H370L300 270 180 300 200 230zM0 300L150 280 60 370 0 385zM100 390L270 300 330 330 200 400z" fill="#0a3550"/>
<path d="M440 170L720 150V250L430 250zM470 260L720 240V300L570 400 430 430z" fill="#143f55"/>
<path d="M500 180H640L610 240H480zM440 270L560 270 500 350 430 350z" fill="#0b3550"/>
<g fill="none" stroke="#127a74" stroke-width="1">
<polyline vector-effect="non-scaling-stroke" stroke-width="1.6" points="60,480 230,350 400,215 430,175 370,95"/>
<polyline vector-effect="non-scaling-stroke" stroke-width="1.5" points="160,405 300,425 560,470 720,490"/>
<polyline vector-effect="non-scaling-stroke" stroke="#0f5f68" points="0,410 100,415"/>
<polyline vector-effect="non-scaling-stroke" stroke="#0f5f68" points="0,255 720,245"/>
<polyline vector-effect="non-scaling-stroke" stroke="#0f5f68" points="0,180 480,175"/>
<polyline vector-effect="non-scaling-stroke" points="430,325 470,270"/>
<polyline vector-effect="non-scaling-stroke" points="520,220 540,185"/>
<polyline vector-effect="non-scaling-stroke" stroke-width="1.5" points="480,480 600,380 720,290"/>
<polyline vector-effect="non-scaling-stroke" points="660,250 690,180"/>
<polyline vector-effect="non-scaling-stroke" points="300,430 295,480"/>
<polyline vector-effect="non-scaling-stroke" points="100,460 300,290"/>
<polyline vector-effect="non-scaling-stroke" stroke="#0f5f68" points="0,300 130,270"/>
<polyline vector-effect="non-scaling-stroke" points="0,460 80,470"/>
<polyline vector-effect="non-scaling-stroke" stroke="#0f5f68" points="560,290 480,370"/>
</g>
</g>
<!-- right zone -->
<g transform="translate(410,780) scale(.33333)">
<path d="M-400 -100H750V340L600 310 500 250 450 210 570 190 430 190 60 150 -400 140z" fill="#1a4359"/>
<path d="M360 50L470 20 750 70V130L600 110z" fill="#0d3249"/>
<path d="M15 150L60 150 430 190 570 190 450 210 420 270 290 270 15 165z" fill="#0e3a52"/>
<path d="M15 290L100 400 270 350 290 280 700 445 750 465V640H300L0 480z" fill="#053852"/>
<path d="M15 170L270 275 260 350 130 400 20 340z" fill="#1a4359"/>
<path d="M30 300L130 350 80 380 20 340z" fill="#143b52"/>
<path d="M0 490L290 640H0z" fill="#173f55"/>
<g fill="none" stroke="#14807a">
<polyline vector-effect="non-scaling-stroke" stroke-width="1.2" points="15,155 700,437"/>
<polyline vector-effect="non-scaling-stroke" stroke-width="1.2" points="15,170 690,450"/>
<polyline vector-effect="non-scaling-stroke" points="270,275 270,350 220,395 100,425 0,410"/>
<polyline vector-effect="non-scaling-stroke" stroke-width="1.2" points="0,490 290,640"/>
<polyline vector-effect="non-scaling-stroke" stroke-width="1.2" points="0,510 260,640"/>
<polyline vector-effect="non-scaling-stroke" points="150,570 190,520"/>
<polyline vector-effect="non-scaling-stroke" points="260,620 325,565"/>
<polyline vector-effect="non-scaling-stroke" points="420,280 455,210 540,190"/>
<polyline vector-effect="non-scaling-stroke" points="460,330 420,280"/>
<polyline vector-effect="non-scaling-stroke" points="490,340 550,310"/>
<polyline vector-effect="non-scaling-stroke" points="580,385 600,360 738,385"/>
<polyline vector-effect="non-scaling-stroke" points="500,250 510,290 600,310 738,340"/>
<polyline vector-effect="non-scaling-stroke" stroke="#1b5c6a" points="15,220 100,250 130,350 80,380"/>
<polyline vector-effect="non-scaling-stroke" stroke="#1b5c6a" points="15,100 300,120 738,200"/>
<polyline vector-effect="non-scaling-stroke" stroke="#1b5c6a" points="120,80 140,30 280,60 310,110"/>
<polyline vector-effect="non-scaling-stroke" stroke="#1b5c6a" points="400,60 430,110 500,90 520,125"/>
<polyline vector-effect="non-scaling-stroke" stroke="#1b5c6a" points="690,170 738,140"/>
</g>
</g>
<!-- central/lower roads -->
<g transform="translate(0,700) scale(.42088,.33333)" fill="none" stroke="#127a74">
<polyline vector-effect="non-scaling-stroke" points="600,880 720,620"/>
<polyline vector-effect="non-scaling-stroke" points="800,880 880,740"/>
<polyline vector-effect="non-scaling-stroke" stroke-width="1.3" points="200,860 420,640 560,510"/>
<polyline vector-effect="non-scaling-stroke" points="60,820 180,800 320,880"/>
<polyline vector-effect="non-scaling-stroke" points="330,880 530,560"/>
<polyline vector-effect="non-scaling-stroke" stroke-width="1.3" points="60,560 640,600"/>
<polyline vector-effect="non-scaling-stroke" stroke-width="1.3" points="810,610 1200,880"/>
</g>
<path d="M339 903L431.4 971.7A135 68 0 0 1 204 920 135 68 0 0 1 240 884z" fill="url(#sec)"/>
<path d="M339 903L431.4 971.7" stroke="#7fd03a" stroke-width="1"/>
<rect x="24" y="737" width="632" height="34" fill="url(#top)"/>
<!-- labels -->
<g transform="translate(24,735) scale(.33333)" class="dk">
<text x="165" y="45">宏远路大道</text><text x="335" y="20">新城</text><text x="320" y="37">万和小区</text><text x="395" y="38">南湖</text><text x="445" y="54">东升路</text><text x="540" y="38">滨河南路</text><text x="635" y="42">东风大街</text><text x="690" y="60">南苑</text><text x="215" y="74">金源花苑路</text><text x="360" y="70">青龙街</text><text x="485" y="72">大学路</text><text x="570" y="70">万达广场</text><text x="630" y="90">和平里小区</text><text x="95" y="68">长江路</text><text x="0" y="82">西城</text><text x="105" y="108">惠民小区</text><text x="230" y="108">龙山村</text><text x="295" y="106">华夏</text><text x="410" y="106">南山路</text><text x="560" y="105">东方花园</text><text x="0" y="120">幸福路口</text><text x="115" y="122">友谊</text><text x="330" y="130">体育</text><text x="385" y="128">城南区</text><text x="455" y="138">河东</text><text x="150" y="142">银河湾</text><text x="235" y="140">五一路口</text><text x="65" y="158">金山路</text><text x="165" y="160">中心</text><text x="225" y="162">和平小区</text><text x="320" y="155">学院路</text><text x="445" y="153">东岸花园</text><text x="510" y="152">滨江路</text><text x="590" y="172">新民路</text><text x="650" y="148">清河花苑</text><text x="395" y="173">工业园区路</text><text x="205" y="185">城东</text><text x="80" y="192">南湖村</text><text x="620" y="185">商业街</text><text x="60" y="208">春风路段</text><text x="360" y="202">文昌路</text><text x="0" y="200">北岸</text><text x="190" y="218">市场路</text><text x="280" y="215">西湖</text><text x="455" y="218">花园路</text><text x="575" y="228">幸福小区</text><text x="680" y="228">南门路</text><text x="0" y="235">东环路口</text><text x="100" y="235">南环大道</text><text x="420" y="238">黄河路</text><text x="240" y="250">新华</text><text x="625" y="257">金龙大厦</text><text x="105" y="262">大学城路</text><text x="420" y="267">南城区</text><text x="290" y="268">东街路</text><text x="0" y="288">中山路口</text><text x="185" y="285">湖滨</text><text x="480" y="280">园区路</text><text x="385" y="290">滨水</text><text x="480" y="295">东路小区</text><text x="630" y="280">西街小区</text><text x="190" y="305">建设路</text><text x="360" y="310">中心花园</text><text x="670" y="300">南风</text><text x="445" y="325">人民路</text><text x="0" y="330">北环路口</text><text x="85" y="332">东山路</text><text x="265" y="340">花溪路</text><text x="175" y="363">青年路口</text><text x="305" y="380">解放大道</text><text x="420" y="382">城北路</text><text x="580" y="362">桃源</text><text x="170" y="388">明珠</text><text x="225" y="396">南京路</text><text x="0" y="400">北街路口</text><text x="40" y="388">云山路</text><text x="490" y="395">文化广场路</text><text x="140" y="422">岳麓</text><text x="30" y="430">花园</text><text x="315" y="438">东华</text><text x="530" y="442">南大街</text><text x="60" y="450">新河路</text><text x="140" y="452">桥东路口</text><text x="335" y="468">锦绣</text><text x="265" y="460">兴隆</text>
</g>
<g transform="translate(410,780) scale(.33333)" class="dk">
<text x="25" y="34">南湖花园路</text><text x="210" y="5">东风</text><text x="295" y="25">万和</text><text x="50" y="72">新城</text><text x="545" y="75">南山公园</text><text x="110" y="160">南苑东路大道</text><text x="20" y="240">北街路</text><text x="175" y="235">青龙</text><text x="135" y="260">西城区</text><text x="165" y="285">金源路</text><text x="295" y="278">华夏南路</text><text x="300" y="296">学院东路</text><text x="400" y="290">龙山大道</text><text x="535" y="278">园区路</text><text x="505" y="312">南门</text><text x="500" y="345">东路</text><text x="545" y="380">花园</text><text x="480" y="414">滨水花园</text><text x="630" y="392">幸福小区路</text><text x="570" y="452">中山东路</text><text x="675" y="442">金龙东路</text><text x="675" y="460">新民路</text><text x="710" y="505">东山</text><text x="45" y="497">金龙工业园</text><text x="70" y="540">工业大道东</text><text x="180" y="568">南河路</text><text x="260" y="610">东环</text><text x="70" y="595">中心</text><text x="0" y="625">西湖</text>
</g>
<g transform="translate(0,700) scale(.42088,.33333)" class="dl">
<text x="490" y="605">商业街</text><text x="565" y="620">市场</text><text x="660" y="600">花园路</text><text x="765" y="635">新村</text><text x="830" y="610">南门</text><text x="425" y="655">长江路</text><text x="365" y="690">滨河</text><text x="340" y="745">城西路</text><text x="125" y="760">春风路</text><text x="235" y="725">学院路</text><text x="290" y="780">文昌路</text><text x="320" y="850">西湖</text><text x="60" y="845">北岸</text><text x="700" y="680">幸福小区</text><text x="870" y="755">湖滨</text><text x="690" y="805">南环路大道</text><text x="780" y="790">东环</text><text x="720" y="850">新华</text><text x="800" y="660">东城</text><text x="840" y="720">花园</text><text x="535" y="632">河东</text><text x="60" y="640">西城</text>
<text x="960" y="148">和平里</text><text x="1130" y="130">东山镇</text><text x="1290" y="150">滨江路</text><text x="1450" y="145">南苑</text><text x="1000" y="180">河东村</text><text x="1170" y="215">滨江公园</text><text x="1290" y="215">新民路</text><text x="1530" y="185">清河</text><text x="1120" y="190">东岸</text><text x="760" y="130">万达广场</text><text x="860" y="175">城南区</text>
</g>
</g>

<!-- popup -->
<rect x="267.7" y="777.7" width="146" height="123.3" fill="#fff"/>
<path d="M335.5 901h7l-3.5 3z" fill="#fff"/>
<circle cx="339" cy="903.5" r="3.4" fill="#6cc32e"/>
<text x="404" y="783.6" font-size="5" fill="#aaa">×</text>
<text x="271" y="788.5" font-size="6.2" font-weight="bold" fill="#79bd3a">站点详细信息</text>
<g class="t5"><text x="271" y="798">设备名称: 仁寿朗庭滨河四期</text><text x="271" y="807">设备号 2020032003100004</text><text x="271" y="816.5">状态 在线</text><text x="271" y="825.5">时间 2020-06-15 17:02:02</text></g>
<g fill="#eef1f5"><rect x="273" y="830" width="40" height="19.3"/><rect x="319" y="830" width="40" height="19.3"/><rect x="365" y="830" width="40" height="19.3"/><rect x="273" y="853" width="40" height="19.3"/><rect x="319" y="853" width="40" height="19.3"/><rect x="365" y="853" width="40" height="19.3"/><rect x="273" y="876" width="40" height="19.3"/><rect x="319" y="876" width="40" height="19.3"/></g>
<g class="px"><text x="275" y="835">PM2.5</text><text x="320" y="835">PM10</text><text x="366" y="835">TSP</text><text x="275" y="858">湿度</text><text x="321" y="858">风速</text><text x="367" y="858">风向</text><text x="275" y="881">温度</text><text x="321" y="881">湿度</text></g>
<g class="pv"><text x="293" y="841.5">43</text><text x="339" y="841.5">57.5</text><text x="385" y="841.5">437</text><text x="293" y="864.5">79.6</text><text x="339" y="864.5">0.3</text><text x="385" y="864.5">233.2</text><text x="293" y="887.5">29.4</text><text x="339" y="887.5">42.2</text></g>
<g class="px" text-anchor="end" font-size="3.8"><text x="312" y="847.5">ug/m³</text><text x="358" y="847.5">ug/m³</text><text x="404" y="847.5">ug/m³</text><text x="312" y="870">%</text><text x="358" y="870">m/s</text><text x="404" y="870">°</text><text x="312" y="893.5">℃</text><text x="358" y="893.5">%RH</text></g>
<rect x="27" y="739" width="27.5" height="8.5" rx="1" fill="#5eb82f"/><text x="41" y="745.4" font-size="4.4" fill="#fff" text-anchor="middle">选择设备</text>

<!-- bottom chart -->
<rect x="24" y="993" width="632" height="79" fill="#0b3550"/>
<rect x="24.3" y="993.3" width="631" height="78.5" fill="none" stroke="#3f9a50" stroke-width=".8"/>
<rect x="27.8" y="998" width="83.7" height="12.7" rx="1.5" fill="none" stroke="#2a8f76" stroke-width=".7"/>
<text x="31.5" y="1006.5" font-size="5.6" fill="#5fcf7e">PM2.5——近12小时内变化趋势</text>
<rect x="602" y="998" width="50" height="12.7" rx="1.5" fill="none" stroke="#2a8f76" stroke-width=".7"/>
<text x="627" y="1006.5" font-size="5.4" fill="#5fcf7e" text-anchor="middle">退出详情</text>
<g font-size="4" fill="#58c06e" text-anchor="end"><text x="46" y="1025">150</text><text x="46" y="1032.5">120</text><text x="46" y="1040">90</text><text x="46" y="1047.5">60</text><text x="46" y="1055">30</text><text x="46" y="1062.5">0</text></g>
<path d="M48 1023v37.7h585" stroke="#3d8a70" stroke-width=".5" fill="none"/>
<g transform="translate(0,700) scale(.42088,.33333)">
<polygon points="115,1083 115,1070 130,1071 145,1070 155,1066 162,1048 172,1046 182,1053 190,1066 198,1070 206,1060 212,1067 218,1056 225,1067 235,1062 243,1050 250,1052 256,1022 262,1050 270,1062 285,1064 300,1061 320,1063 345,1062 370,1064 400,1060 440,1059 470,1061 500,1063 530,1065 560,1066 590,1067 620,1065 650,1059 680,1064 710,1066 745,1062 780,1066 820,1063 860,1061 880,1058 893,1047 905,1052 920,1048 935,1042 950,1048 958,1045 966,1022 975,1050 990,1046 1005,1050 1013,1030 1022,1050 1040,1046 1050,1040 1058,1030 1068,1052 1085,1046 1095,1051 1110,1038 1120,1052 1135,1036 1145,1052 1160,1048 1168,1056 1174,1018 1182,1044 1195,1050 1210,1058 1225,1055 1235,1042 1247,1048 1254,1064 1263,992 1268,1050 1273,1015 1280,1066 1287,1040 1293,1066 1305,1055 1318,1052 1328,998 1336,1055 1350,1060 1365,1046 1380,1050 1395,1042 1410,1056 1425,1048 1440,1055 1455,1046 1470,1052 1480,1040 1490,1054 1503,1050 1503,1083" fill="url(#gf)"/>
<polyline vector-effect="non-scaling-stroke" fill="none" stroke="#86d03c" stroke-width=".9" points="115,1070 130,1071 145,1070 155,1066 162,1048 172,1046 182,1053 190,1066 198,1070 206,1060 212,1067 218,1056 225,1067 235,1062 243,1050 250,1052 256,1022 262,1050 270,1062 285,1064 300,1061 320,1063 345,1062 370,1064 400,1060 440,1059 470,1061 500,1063 530,1065 560,1066 590,1067 620,1065 650,1059 680,1064 710,1066 745,1062 780,1066 820,1063 860,1061 880,1058 893,1047 905,1052 920,1048 935,1042 950,1048 958,1045 966,1022 975,1050 990,1046 1005,1050 1013,1030 1022,1050 1040,1046 1050,1040 1058,1030 1068,1052 1085,1046 1095,1051 1110,1038 1120,1052 1135,1036 1145,1052 1160,1048 1168,1056 1174,1018 1182,1044 1195,1050 1210,1058 1225,1055 1235,1042 1247,1048 1254,1064 1263,992 1268,1050 1273,1015 1280,1066 1287,1040 1293,1066 1305,1055 1318,1052 1328,998 1336,1055 1350,1060 1365,1046 1380,1050 1395,1042 1410,1056 1425,1048 1440,1055 1455,1046 1470,1052 1480,1040 1490,1054 1503,1050"/>
</g>
<g class="gx"><text x="48.5" y="1067">2020-06-14 17:03:00</text><text x="101" y="1067">2020-06-14 19:13:00</text><text x="154" y="1067">2020-06-14 21:23:00</text><text x="207" y="1067">2020-06-14 23:33:00</text><text x="260" y="1067">2020-06-15 01:43:00</text><text x="313" y="1067">2020-06-15 03:53:00</text><text x="366" y="1067">2020-06-15 06:03:00</text><text x="418.5" y="1067">2020-06-15 08:13:00</text><text x="471" y="1067">2020-06-15 10:23:00</text><text x="524" y="1067">2020-06-15 12:33:00</text><text x="577" y="1067">2020-06-15 14:43:00</text><text x="630" y="1067">2020-06-15 16:53:00</text></g>
</g>

<!-- ============ SECTION 3: VIDEO ============ -->
<g filter="url(#b3)">
<rect x="0" y="1191" width="82.5" height="310" fill="#adadad"/>
<rect x="614" y="1191" width="42" height="310" fill="#adadad"/>
<rect x="0" y="1223" width="82.5" height="4" fill="#9ba4a8"/><rect x="614" y="1223" width="42" height="4" fill="#9ba4a8"/>
<rect x="0" y="1228" width="82.5" height="22" fill="#939393"/><rect x="614" y="1228" width="42" height="22" fill="#939393"/>
<rect x="0" y="1491" width="82.5" height="10" fill="#a2a2a2"/><rect x="614" y="1491" width="42" height="10" fill="#a2a2a2"/>
<text x="0" y="1202" font-size="8" fill="#4d4d4d">列表:</text>
<rect x="24" y="1193" width="55" height="15" fill="#b69f9f"/>
<text x="30" y="1202.5" font-size="5.6" fill="#b5504f">D54574660</text><text x="70" y="1202.5" font-size="6" fill="#b5504f">×</text>
<text x="0" y="1242" font-size="8" fill="#4d4d4d">表</text>
<text x="39" y="1265" font-size="7" fill="#666" text-anchor="middle">设备号</text>
<g class="rd" text-anchor="middle"><text x="39" y="1292">2019092903106012</text><text x="39" y="1320">2019092903106013</text><text x="39" y="1348">2019092903106014</text><text x="39" y="1376.5">2019092903106004</text><text x="39" y="1404.5">2019092903106015</text><text x="39" y="1433">2019092903106016</text><text x="39" y="1461">2019101403106002</text></g>
<path d="M0 1277h82M0 1305h82M0 1333h82M0 1361h82M0 1390h82M0 1418h82M0 1446h82M0 1474h82" stroke="#a4a4a4" stroke-width=".5"/>
<text x="614" y="1241" font-size="8" fill="#5d5d5d">键字(可输入</text>
<text x="647" y="1348" font-size="6.4" fill="#5d5d5d">调</text><text x="645" y="1405" font-size="6.4" fill="#5d5d5d">调</text>

<rect x="93" y="1200.5" width="510" height="301" fill="#ddd"/>
<rect x="93.5" y="1201" width="253.5" height="169" fill="#444"/>
<rect x="349" y="1201" width="253.5" height="169" fill="#444"/>
<rect x="93.5" y="1373" width="253.5" height="128" fill="#444"/>
<rect x="349" y="1373" width="253.5" height="128" fill="#444"/>
</g>

<!-- Photo 1 -->
<g clip-path="url(#cp1)"><g filter="url(#b6)" transform="translate(90,1195) scale(.33333)">
<rect x="12" y="97" width="758" height="351" fill="#87857c"/>
<path d="M400 150H770V245L680 205 640 240H440L400 290z" fill="#a3a59e"/>
<rect x="400" y="290" width="370" height="158" fill="#83817a"/>
<path d="M420 300l300 20M430 360l200 -20M500 410l250 10" stroke="#77756c" stroke-width="9" fill="none"/>
<path d="M12 97H280V150L12 160z" fill="#ced1d5"/>
<path d="M130 100h80v6h-80z" fill="#4a7fb2"/>
<path d="M12 130l100-12" stroke="#7f8285" stroke-width="4" fill="none"/><rect x="205" y="105" width="70" height="40" fill="#b4b7ba"/>
<path d="M270 97H345L330 150H300z" fill="#4d5f4d"/>
<path d="M12 160L330 150V185L12 195z" fill="#47453f"/>
<path d="M12 195L260 185 175 252 12 255z" fill="#2e2e33"/>
<path d="M12 255H175L140 298H12z" fill="#9a9da0"/>
<rect x="12" y="260" width="140" height="5" fill="#55585c"/>
<path d="M12 300H130L60 372 12 412z" fill="#1e1e20"/>
<path d="M15 338H90L40 388 15 405z" fill="#3c382f"/>
<path d="M258 185L292 190 285 240 125 448H12V412z" fill="#3b3d40"/>
<path d="M285 205L292 240 150 425 112 395z" fill="#a0a1a2"/>
<path d="M100 400L120 420 60 448H12z" fill="#8a8c8e"/>
<rect x="280" y="190" width="40" height="45" fill="#cfcfca"/>
<path d="M335 172H395L408 350V448H252V372L285 290 310 230z" fill="#a4a594"/>
<path d="M255 375H405V448H255z" fill="#b4b5a4"/>
<ellipse cx="365" cy="184" rx="30" ry="9" fill="#6f6b5e"/><ellipse cx="358" cy="208" rx="35" ry="9" fill="#6f6b5e"/><ellipse cx="352" cy="227" rx="42" ry="11" fill="#6a665a"/><ellipse cx="342" cy="277" rx="52" ry="15" fill="#6a665a"/><ellipse cx="335" cy="322" rx="62" ry="20" fill="#655f53"/>
<ellipse cx="342" cy="270" rx="13" ry="4" fill="#c3c2b4"/><ellipse cx="336" cy="314" rx="14" ry="4" fill="#c3c2b4"/>
<path d="M325 150l10 45" stroke="#a9414a" stroke-width="5"/>
<path d="M345 100H585V140L520 150 470 150 440 142 350 150z" fill="#a3a5a5"/>
<g fill="#ececec"><rect x="358" y="118" width="42" height="18" rx="5"/><rect x="400" y="133" width="60" height="14" rx="5"/><rect x="465" y="118" width="40" height="22" rx="5"/><rect x="555" y="115" width="25" height="20" rx="4"/><rect x="360" y="102" width="60" height="12" rx="4"/><rect x="430" y="102" width="38" height="10" rx="3"/><rect x="480" y="102" width="60" height="10" rx="3"/></g>
<rect x="512" y="118" width="45" height="28" rx="5" fill="#2c2e33"/>
<path d="M350 157L382 146H440L493 172 480 190 372 174z" fill="#e6e7e7"/><path d="M385 150h40l8 14h-55z" fill="#4a4e53"/><circle cx="466" cy="183" r="9" fill="#222"/>
<rect x="578" y="97" width="192" height="30" fill="#4f575d"/>
<path d="M585 122H770V205L690 195 590 150z" fill="#b6b8b8"/>
<g fill="#eaeaea"><rect x="585" y="122" width="40" height="20" rx="5"/><rect x="610" y="130" width="38" height="26" rx="5"/><rect x="650" y="142" width="35" height="24" rx="5"/><rect x="695" y="125" width="50" height="20" rx="5"/><rect x="730" y="140" width="40" height="20" rx="4"/></g>
<rect x="688" y="162" width="70" height="42" rx="8" fill="#26272c"/><rect x="732" y="170" width="40" height="38" rx="6" fill="#eaeaea"/>
<path d="M675 205L770 240V245H680z" fill="#5c5a54"/>
</g></g>

<!-- Photo 2 -->
<g clip-path="url(#cp2)"><g filter="url(#b6)" transform="translate(345,1195) scale(.33333)">
<rect x="12" y="97" width="758" height="351" fill="url(#sky)"/>
<ellipse cx="320" cy="135" rx="150" ry="26" fill="#e3e5e3"/><ellipse cx="620" cy="125" rx="100" ry="18" fill="#b7babb"/>
<g fill="#6c7278"><rect x="30" y="170" width="60" height="65"/><rect x="90" y="182" width="42" height="50"/><rect x="152" y="195" width="95" height="45"/><rect x="255" y="203" width="26" height="50"/><rect x="285" y="198" width="46" height="50"/><rect x="370" y="214" width="28" height="40"/><rect x="425" y="172" width="130" height="80" fill="#777b7f"/><rect x="500" y="165" width="30" height="90" fill="#777b7f"/><rect x="575" y="158" width="98" height="100" fill="#70747a"/><rect x="672" y="180" width="40" height="70"/><rect x="12" y="180" width="18" height="50"/></g>
<rect x="38" y="165" width="50" height="8" fill="#4a7fa0"/>
<path d="M475 100v70" stroke="#9c9c9c" stroke-width="2"/>
<path d="M12 240Q90 205 170 205T250 250V272H12z" fill="#2d4a30"/><path d="M285 232h50v25h-50zM345 240h30v20h-30zM410 232h80v25h-80zM520 215h50v35h-50z" fill="#3a5439"/>
<rect x="12" y="255" width="758" height="25" fill="#8f918c"/>
<rect x="50" y="262" width="185" height="14" fill="#2b4dad"/><rect x="120" y="256" width="85" height="12" fill="#2b3a8c"/><rect x="238" y="252" width="60" height="33" fill="#c4603e"/>
<rect x="300" y="255" width="95" height="25" fill="#c5b9a9"/><rect x="115" y="268" width="15" height="25" fill="#c0412f"/>
<path d="M312 288L360 268H440L465 292H320z" fill="#2f5fa6"/>
<rect x="465" y="255" width="35" height="35" fill="#6a2e3a"/><path d="M485 248H600V265H565L495 288H485z" fill="#a92929"/><path d="M495 263H575V278L495 288z" fill="#5c8d2c"/>
<rect x="615" y="222" width="40" height="46" fill="#d83a3a"/><rect x="685" y="248" width="85" height="22" fill="#2f3d8c"/>
<rect x="712" y="126" width="58" height="128" fill="#23203a"/>
<path d="M725 150h35v25h-35zM725 180h35v25h-35zM725 212h35v25h-35z" fill="#c6262f"/>
<rect x="12" y="280" width="758" height="168" fill="#35352f"/>
<path d="M12 280H470V380H230V410H12z" fill="#3a3a35"/>
<path d="M40 320L150 310 155 400 50 405z" fill="#55544d"/><path d="M50 345l100-4M50 365l100-5M50 385l100-4M170 300l120 -5M170 330l130 -5M170 350l140 -5M280 300l40 60M20 300l120 -5" stroke="#1f1f1c" stroke-width="5"/>
<rect x="148" y="360" width="82" height="42" fill="#7b7e76"/>
<rect x="12" y="360" width="30" height="45" fill="#5a5a54"/>
<rect x="570" y="272" width="135" height="66" fill="#767e76"/><rect x="712" y="270" width="58" height="82" fill="#7f8680"/><rect x="635" y="274" width="3" height="62" fill="#444"/>
<rect x="480" y="310" width="40" height="45" fill="#6e6e68"/><rect x="520" y="315" width="85" height="30" fill="#33332f"/>
<rect x="522" y="347" width="180" height="48" fill="#7f8680"/><rect x="712" y="355" width="58" height="48" fill="#7a817b"/><rect x="470" y="360" width="50" height="22" fill="#7a7c74"/>
<rect x="320" y="308" width="66" height="66" fill="#1f3f9a"/><text x="323" y="363" font-size="42" font-weight="bold" fill="#eee">钟</text>
<rect x="328" y="312" width="50" height="12" fill="#b53030"/>
<path d="M195 402L390 372 470 385 280 415 290 425 560 392 620 395 600 412 560 420V448H140L195 420z" fill="#9a8d7c"/>
<path d="M340 430L545 392 555 402 370 445z" fill="#b7ae9c"/>
<path d="M610 420L690 395 770 400V448H615z" fill="#6f6f6a"/><path d="M690 425l25 -25h15l-25 25zM725 425l25 -20h15l-20 25z" fill="#aaa"/>
<rect x="12" y="420" width="135" height="28" fill="#2c2c28"/>
</g></g>

<!-- Photo 3 -->
<g clip-path="url(#cp3)"><g filter="url(#b6)" transform="translate(90,1370) scale(.33333)">
<rect x="12" y="90" width="758" height="302" fill="#5d5e5f"/>
<rect x="12" y="90" width="474" height="105" fill="#cfc68e"/>
<path d="M40 90h6v90h-6z" fill="#a39c74"/>
<rect x="182" y="118" width="68" height="66" fill="#d8d6c8"/><rect x="186" y="121" width="30" height="32" fill="#3e3a38"/><rect x="219" y="121" width="28" height="32" fill="#574238"/><rect x="186" y="155" width="30" height="27" fill="#5a5552"/><rect x="219" y="155" width="28" height="27" fill="#3a302e"/>
<rect x="485" y="92" width="285" height="118" fill="#d2c88f"/>
<path d="M485 105L620 92H770V100L485 118z" fill="#e3dcc0" opacity=".7"/>
<g fill="#3f4a55"><rect x="487" y="118" width="20" height="32"/><rect x="555" y="106" width="26" height="35"/><rect x="637" y="96" width="34" height="36"/><rect x="638" y="165" width="32" height="38"/><rect x="557" y="175" width="24" height="32" fill="#bdb889"/><rect x="487" y="178" width="20" height="14"/></g>
<rect x="716" y="110" width="54" height="80" fill="#bccdd2"/><rect x="648" y="128" width="25" height="16" fill="#c5c9c9"/>
<rect x="12" y="185" width="143" height="64" fill="#4e2438"/><rect x="12" y="248" width="143" height="16" fill="#9a9a9a"/>
<rect x="155" y="192" width="372" height="78" fill="#ac3f6e"/>
<path d="M190 212h42v40h-42z" fill="#f0e7ea" opacity=".85"/>
<text x="250" y="240" font-size="29" fill="#eed0de" letter-spacing="1">当加广告长沙分公司</text>
<rect x="12" y="264" width="46" height="92" fill="#c7ad68"/><rect x="14" y="296" width="26" height="35" fill="#b83a3f"/>
<rect x="58" y="266" width="80" height="84" fill="#2a2a2b"/>
<path d="M138 268H200V370L138 350z" fill="#c9cacb"/>
<rect x="200" y="270" width="6" height="100" fill="#d0b04a"/>
<rect x="206" y="284" width="78" height="56" fill="#d5e2e8"/>
<rect x="285" y="272" width="205" height="56" fill="#3a3a34"/><rect x="426" y="270" width="40" height="50" fill="#e4e6e6"/>
<path d="M310 315l115 -4" stroke="#2d7fc2" stroke-width="4"/>
<rect x="205" y="335" width="40" height="45" fill="#1d5f9d"/><rect x="245" y="335" width="33" height="40" fill="#2a2a2a"/>
<ellipse cx="105" cy="350" rx="18" ry="16" fill="#6f7068"/>
<path d="M150 370l120 -20 20 42H170z" fill="#8a8a88"/>
<path d="M272 375L340 336 400 322H475L526 345V372L490 390H290z" fill="#7a7f89"/><path d="M345 340L400 328H470L490 345H360z" fill="#2e3238"/><circle cx="330" cy="378" r="15" fill="#1f2022"/><circle cx="480" cy="372" r="14" fill="#1f2022"/>
<path d="M12 357Q90 355 160 392H12z" fill="#d7dde0"/>
<rect x="527" y="206" width="243" height="32" fill="#2a2a58"/><g fill="#d3c9d6"><rect x="550" y="214" width="16" height="16"/><rect x="585" y="214" width="16" height="16"/><rect x="620" y="214" width="16" height="16"/><rect x="655" y="214" width="16" height="16"/><rect x="690" y="214" width="16" height="16"/><rect x="720" y="214" width="40" height="16"/></g>
<rect x="527" y="238" width="243" height="10" fill="#2b6c58"/>
<rect x="530" y="248" width="78" height="45" fill="#34332f"/><rect x="612" y="250" width="95" height="40" fill="#bdbdb4"/><rect x="712" y="250" width="58" height="50" fill="#3c4147"/><path d="M725 252h45v18z" fill="#4f97c9"/>
<path d="M490 270l35 -3v40l-35 10z" fill="#c6c6c0"/>
<path d="M570 300L610 285H690L735 308 720 326H580z" fill="#1f2024"/>
<path d="M500 320L770 328V390H520z" fill="#55555a"/><path d="M540 350l85 0M540 362l50 -4" stroke="#bbb" stroke-width="1.5"/>
</g></g>

<!-- Photo 4 -->
<g clip-path="url(#cp4)"><g filter="url(#b6)" transform="translate(90,1370) scale(.33333)">
<rect x="778" y="90" width="757" height="302" fill="#8b8579"/>
<rect x="778" y="90" width="112" height="150" fill="#e2e4e5"/>
<path d="M778 140h18v70h-18zM810 130l28-10v90h-28zM835 90h38v110h-38z" fill="#8b9297"/>
<rect x="888" y="90" width="340" height="110" fill="#7f7970"/><rect x="955" y="90" width="65" height="80" fill="#8f8678"/><rect x="1075" y="90" width="130" height="50" fill="#565450"/>
<path d="M808 218L1060 128 1230 92 1480 90 1155 160 808 230z" fill="#ced3d5"/>
<path d="M1155 160L1535 92V195L1155 215z" fill="#2d9a58"/>
<path d="M808 232L1155 162V215L808 240z" fill="#a8623a"/><path d="M1085 175L1155 162V210L1085 218z" fill="#a54a3a"/>
<path d="M1155 160L1240 145V205L1155 212z" fill="#2e8f50"/>
<text x="1160" y="200" font-size="26" fill="#f5d8b0">新生月</text>
<text x="1280" y="180" font-size="34" font-weight="bold" fill="#f4f2e0">天虹</text>
<text x="1420" y="165" font-size="32" fill="#f4f2e0">爱家 .</text>
<path d="M1000 158l65 -2" stroke="#ddd" stroke-width="3"/>
<rect x="778" y="212" width="30" height="40" fill="#c9b55a"/>
<path d="M808 240L1155 218 1530 205V330L808 280z" fill="#6e6a5e"/>
<rect x="1280" y="208" width="255" height="28" fill="#1f7a52"/>
<rect x="980" y="228" width="200" height="16" fill="#8b5a6f"/>
<rect x="1195" y="222" width="45" height="26" fill="#b4a680"/><rect x="1205" y="248" width="40" height="40" fill="#3a3833"/>
<rect x="1310" y="240" width="95" height="75" fill="#a8966a"/><rect x="1480" y="240" width="55" height="90" fill="#a8966a"/><rect x="1445" y="235" width="30" height="78" fill="#2aa050"/>
<rect x="1250" y="262" width="28" height="25" fill="#ddd"/><rect x="1415" y="265" width="45" height="35" fill="#ddd"/>
<rect x="1065" y="245" width="40" height="65" fill="#b8b39c"/><rect x="1130" y="245" width="35" height="50" fill="#3a3833"/><rect x="1025" y="252" width="28" height="45" fill="#34322e"/><rect x="990" y="252" width="20" height="35" fill="#3a3833"/><rect x="935" y="243" width="20" height="35" fill="#6d3f38"/>
<path d="M778 280L1000 300 1130 340 1300 370 1535 392H778z" fill="#8f897c"/>
<path d="M810 265h50v22h-50z" fill="#3c3c3a"/><rect x="780" y="258" width="25" height="14" fill="#555"/><rect x="945" y="280" width="45" height="20" fill="#45423d"/>
<rect x="778" y="305" width="30" height="65" fill="#807a6e"/>
<path d="M800 355L825 312H905L930 340V390H800z" fill="#dfe1e1"/><path d="M832 320H902L908 340H822z" fill="#464a4f"/><rect x="825" y="365" width="50" height="8" fill="#5c6065"/>
<path d="M985 325L1005 302H1060L1090 322V352H990z" fill="#24252a"/>
<path d="M1130 340V300L1140 288H1270L1312 330V388H1145z" fill="#9a9ea0"/><path d="M1140 296H1230V328H1140zM1240 300H1300L1310 332H1240z" fill="#3b3e42"/><circle cx="1220" cy="375" r="12" fill="#2a2a2a"/>
<path d="M1310 390V325L1320 318H1470L1535 365V392z" fill="#cfcfca"/><path d="M1320 328H1490L1510 360H1320z" fill="#35373b"/><path d="M1302 368H1420L1535 382V392H1302z" fill="#c5383a"/>
</g></g>

<g filter="url(#b3)">
<!-- header captions -->
<text x="105" y="1217" class="vt">19092912(D54574660)</text>
<text x="360" y="1217" class="vt">19092913(D54574688)</text>
<text x="105" y="1389" class="vt">19092914(D55204107)</text>
<text x="360" y="1389" class="vt">19092904(D55204119)</text>
<use href="#vh"/><use href="#vh" x="255"/><use href="#vh" y="171.7"/><use href="#vh" x="255" y="171.7"/>
<use href="#vf"/><use href="#vf" x="255"/>
<text x="292" y="1360" font-size="6" fill="#e6e6e6">标清</text>
<text x="547" y="1360" font-size="6" fill="#e6e6e6">标清</text>
<!-- timestamps -->
<text x="105" y="1340" class="ts">2020-05-31</text><text x="170" y="1340" class="ts" opacity=".75">星期日</text><text x="210" y="1340" class="ts">16:59:16</text><text x="295" y="1340" class="ts">D54574660</text>
<text x="360" y="1340" class="ts">2020-05-31</text><text x="425" y="1340" class="ts" opacity=".85">星期日</text><text x="465" y="1340" class="ts">16: 9:16</text><text x="550" y="1340" class="ts">D54574688</text>
</g>

<!-- ============ RIGHT LABELS ============ -->
<g>
<rect x="802.5" y="15.5" width="182.5" height="310" fill="none" stroke="#1ea9ea" stroke-width="1.2" stroke-dasharray="1.5 1.5"/>
<rect x="802.5" y="575.5" width="182.5" height="310" fill="none" stroke="#1ea9ea" stroke-width="1.2" stroke-dasharray="1.5 1.5"/>
<rect x="802.5" y="1191.5" width="182.5" height="310" fill="none" stroke="#1ea9ea" stroke-width="1.2" stroke-dasharray="1.5 1.5"/>
<text x="893" y="177" class="lb">数据中心</text>
<text x="893" y="737" class="lb">地图展示</text>
<text x="893" y="1353" class="lb">视屏监控</text>
<g fill="#fff" stroke="#08a3ea" stroke-width="2.6">
<path d="M656 170H772" fill="none"/><circle cx="776.5" cy="170" r="4"/>
<path d="M656 729.5H772" fill="none"/><circle cx="776.5" cy="729.5" r="4"/>
<path d="M656 1345.5H772" fill="none"/><circle cx="776.5" cy="1345.5" r="4"/>
</g>
</g>
</svg>
</body></html>
